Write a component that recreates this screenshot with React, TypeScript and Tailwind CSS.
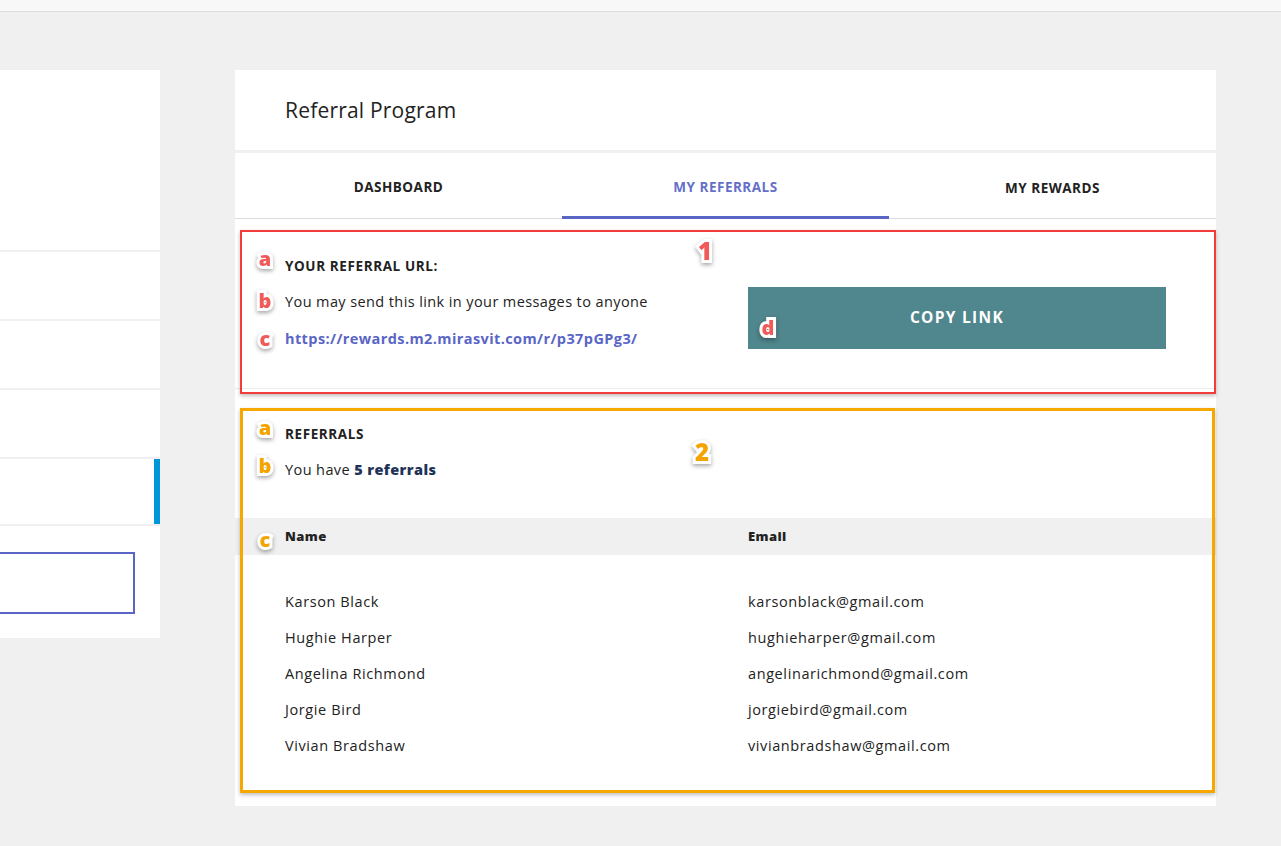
import React from "react";

const referrals = [
  { name: "Karson Black", email: "karsonblack@gmail.com" },
  { name: "Hughie Harper", email: "hughieharper@gmail.com" },
  { name: "Angelina Richmond", email: "angelinarichmond@gmail.com" },
  { name: "Jorgie Bird", email: "jorgiebird@gmail.com" },
  { name: "Vivian Bradshaw", email: "vivianbradshaw@gmail.com" },
];

type BadgeProps = {
  label: string;
  x: number;
  y: number;
  color: "red" | "orange";
  big?: boolean;
};

function Badge({ label, x, y, color, big }: BadgeProps) {
  return (
    <span
      className={
        "absolute -translate-x-1/2 -translate-y-1/2 font-extrabold leading-none [paint-order:stroke_fill] [-webkit-text-stroke:6px_white] drop-shadow-[0_2px_2px_rgba(0,0,0,0.35)] " +
        (big ? "text-[24px] " : "text-[20px] ") +
        (color === "red" ? "text-[#f25a5a]" : "text-[#f5a300]")
      }
      style={{ left: x, top: y }}
    >
      {label}
    </span>
  );
}

export default function App() {
  return (
    <div className="min-h-screen bg-[#f0f0f0] font-['Open_Sans','Liberation_Sans',sans-serif] text-[#222]">
      <div className="h-[12px] bg-[#f8f8f8] border-b border-[#dcdcdc]" />

      <div className="flex items-start gap-[75px] pt-[58px]">
        {/* left nav */}
        <div className="w-[160px] h-[568px] bg-white flex flex-col">
          <div className="h-[180px]" />
          <div className="h-[69px] border-t-2 border-[#f0f0f0]" />
          <div className="h-[69px] border-t-2 border-[#f0f0f0]" />
          <div className="h-[69px] border-t-2 border-[#f0f0f0]" />
          <div className="h-[69px] border-t-2 border-b-2 border-[#f0f0f0] flex justify-end">
            <div className="w-[6px] h-full bg-[#0095d9]" />
          </div>
          <div className="mt-[26px] w-[135px] h-[62px] border-2 border-l-0 border-[#5a66c6]" />
        </div>

        {/* main panel */}
        <div className="relative w-[981px] bg-white">
          <div className="h-[83px] flex items-center px-[50px] pt-[1px] border-b-[3px] border-[#f0f0f0]">
            <h1 className="text-[21px] tracking-[0.2px] text-[#222] font-normal">Referral Program</h1>
          </div>

          <div className="grid grid-cols-3 h-[66px] border-b border-[#dcdcdc] text-[13.5px] font-bold tracking-[0.5px]">
            <div className="flex items-center justify-center text-[#222] pt-[3px]">DASHBOARD</div>
            <div className="flex items-center justify-center text-[#6470c8] border-b-[3px] border-[#5a66c6] -mb-px pt-[6px]">
              MY REFERRALS
            </div>
            <div className="flex items-center justify-center text-[#222] pt-[5px]">MY REWARDS</div>
          </div>

          {/* referral url */}
          <div className="h-[170px] flex justify-between px-[50px] pt-[37px] border-b border-[#ececec]">
            <div className="flex flex-col tracking-[0.4px]">
              <div className="text-[13.5px] font-bold tracking-[0.6px] h-[20px] leading-[20px]">YOUR REFERRAL URL:</div>
              <div className="text-[14.5px] mt-[16px] h-[20px] leading-[20px]">
                You may send this link in your messages to anyone
              </div>
              <a className="text-[14.5px] font-bold text-[#5a66c6] mt-[17px] h-[20px] leading-[20px]">
                https://rewards.m2.mirasvit.com/r/p37pGPg3/
              </a>
            </div>
            <button className="mt-[31px] w-[418px] h-[62px] bg-[#50868d] text-white text-[15.5px] font-bold tracking-[1.3px]">
              COPY LINK
            </button>
          </div>

          {/* referrals */}
          <div className="pt-[35px] pb-[42px] tracking-[0.4px]">
            <div className="px-[50px] text-[13.5px] font-bold tracking-[0.6px] h-[20px] leading-[20px]">REFERRALS</div>
            <div className="px-[50px] text-[14.5px] mt-[16px] h-[20px] leading-[20px]">
              You have <span className="font-extrabold text-[#1f3358]">5 referrals</span>
            </div>
            <table className="w-full mt-[38px] text-left">
              <thead>
                <tr className="bg-[#f0f0f0] h-[37px]">
                  <th className="pl-[50px] w-[513px] text-[13px] font-extrabold">Name</th>
                  <th className="text-[13px] font-extrabold">Email</th>
                </tr>
              </thead>
              <tbody>
                <tr className="h-[29px]">
                  <td />
                  <td />
                </tr>
                {referrals.map((r) => (
                  <tr key={r.email} className="h-[36px] text-[14.5px] tracking-[0.6px]">
                    <td className="pl-[50px]">{r.name}</td>
                    <td>{r.email}</td>
                  </tr>
                ))}
              </tbody>
            </table>
          </div>

          {/* annotation overlays */}
          <div className="absolute left-[5px] top-[160px] w-[976px] h-[164px] border-2 border-[#f03c3c] shadow-[0_2px_4px_rgba(0,0,0,0.25)] pointer-events-none" />
          <div className="absolute left-[5px] top-[338px] w-[975px] h-[385px] border-[3px] border-[#f5a800] shadow-[0_2px_4px_rgba(0,0,0,0.25)] pointer-events-none" />

          <Badge label="a" x={30} y={189} color="red" />
          <Badge label="b" x={30} y={231} color="red" />
          <Badge label="c" x={30} y={269} color="red" />
          <Badge label="1" x={470} y={181} color="red" big />
          <Badge label="d" x={533} y={258} color="red" />

          <Badge label="a" x={30} y={358} color="orange" />
          <Badge label="b" x={30} y={396} color="orange" />
          <Badge label="2" x={467} y={382} color="orange" big />
          <Badge label="c" x={30} y={470} color="orange" />
        </div>
      </div>
    </div>
  );
}
